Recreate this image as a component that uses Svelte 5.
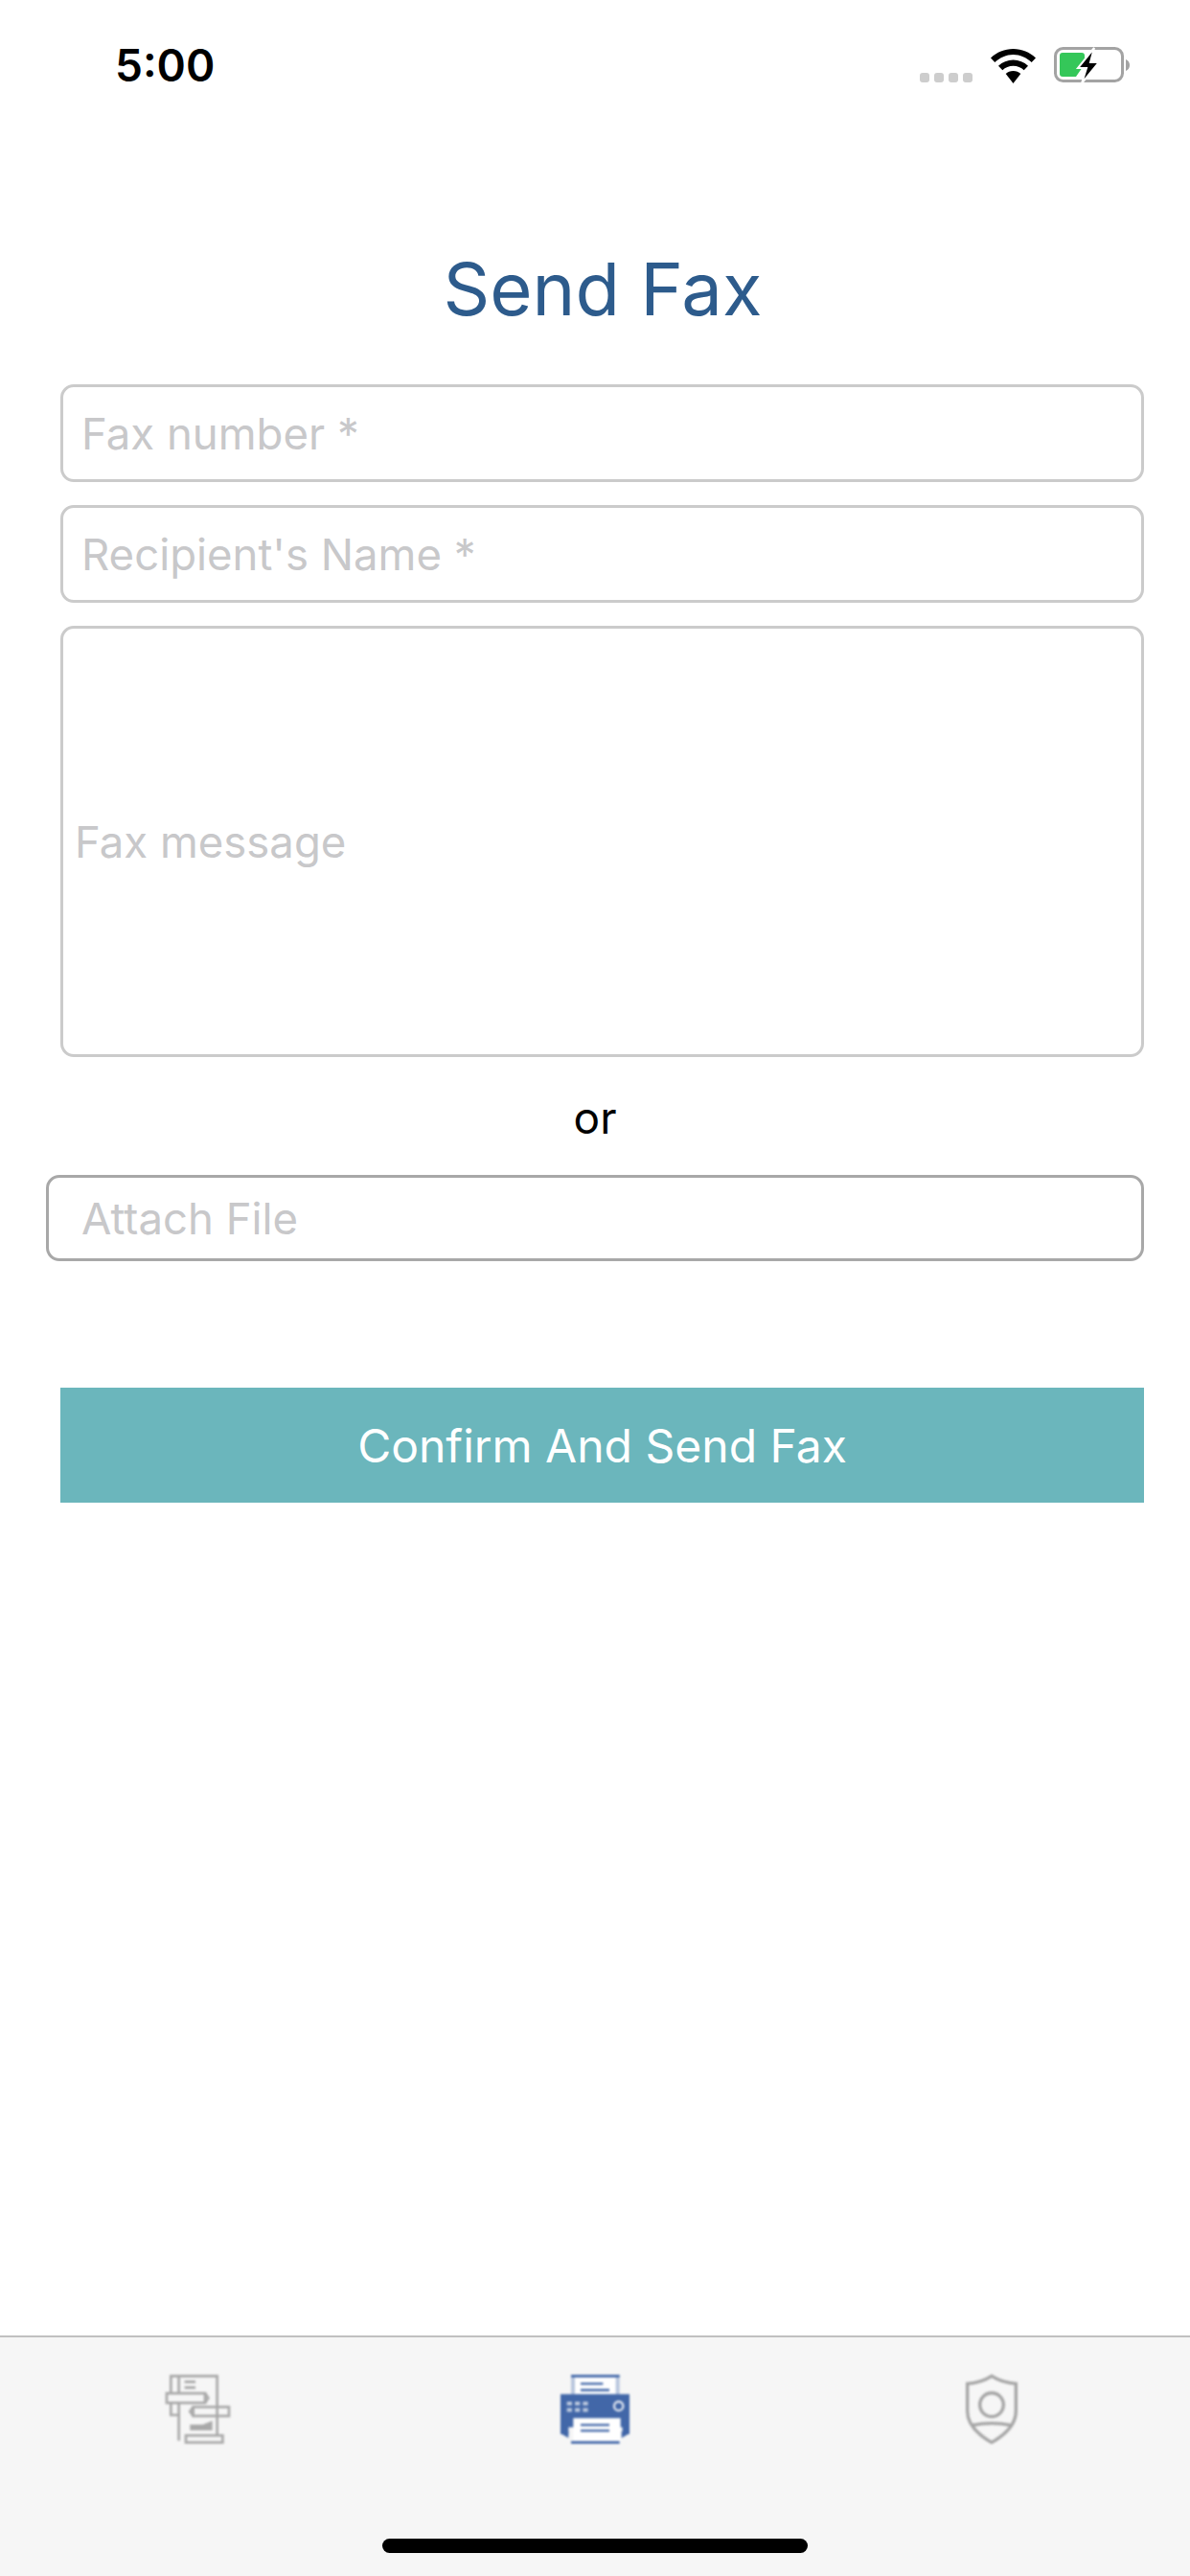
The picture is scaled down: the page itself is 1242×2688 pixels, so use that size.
<script>
  const fields = ["Fax number *", "Recipient's Name *"];
</script>

<div class="screen">
  <div class="status">
    <span class="time">5:00</span>
    <div class="status-icons">
      <div class="signal">
        <i></i><i></i><i></i><i></i>
      </div>
      <svg class="wifi" width="47" height="36" viewBox="0 0 47 36">
        <path d="M23.5 0C14.5 0 6.4 3.5 0 9.5l4.3 4.6C9.7 9 16.3 6 23.5 6s13.8 3 19.2 8.1L47 9.5C40.6 3.5 32.5 0 23.5 0z" fill="#000" />
        <path d="M23.5 11.5c-5.900 0-11.300 2.300-15.500 6.200l4.300 4.600c3-2.800 6.900-4.500 11.200-4.500s8.200 1.700 11.200 4.500l4.300-4.600c-4.200-3.900-9.600-6.200-15.500-6.200z" fill="#000" />
        <path d="M23.5 23c-3.100 0-5.800 1.200-7.800 3.100L23.500 36l7.800-9.900c-2-1.900-4.700-3.100-7.800-3.100z" fill="#000" />
      </svg>
      <svg class="battery" width="79" height="38" viewBox="0 0 79 38">
        <rect x="1.500" y="1.500" width="70" height="34" rx="8" fill="none" stroke="#a3a3a3" stroke-width="3" />
        <path d="M75 13c2.500 1 4 3 4 6s-1.500 5-4 6z" fill="#a3a3a3" />
        <path d="M9 6h20a3 3 0 0 1 3 3v9l-9 13H9a3 3 0 0 1-3-3V9a3 3 0 0 1 3-3z" fill="#34c759" />
        <path d="M42 1 25 22h9l-5 16 18-22h-9l4-15z" fill="#000" stroke="#fff" stroke-width="2" />
      </svg>
    </div>
  </div>

  <h1>Send Fax</h1>

  <form class="form">
    {#each fields as field}
      <div class="field"><span>{field}</span></div>
    {/each}
    <div class="field message"><span>Fax message</span></div>
    <p class="or">or</p>
    <div class="field attach"><span>Attach File</span></div>
    <button type="button">Confirm And Send Fax</button>
  </form>

  <nav class="tabs">
    <div class="tab">
      <svg width="120" height="100" viewBox="-9 0 360 300" fill="none" stroke="#a9a9a9" stroke-width="8">
        <path d="M85 112V58h145v182" />
        <path d="M85 142v38h25M110 58v54M110 142v118" />
        <rect x="72" y="112" width="120" height="30" />
        <path d="M192 112l10 15-10 15" />
        <rect x="155" y="155" width="112" height="28" />
        <path d="M155 155l-10 14 10 14" />
        <rect x="132" y="244" width="115" height="22" />
        <path d="M128 76h34M128 94h34" />
        <path d="M145 228v-18h40l30-12v30z" fill="#a9a9a9" stroke="none" />
      </svg>
    </div>
    <div class="tab">
      <svg width="120" height="100" viewBox="3 0 360 300">
        <path d="M108 54h152v66H108z" fill="#b8c6dd" />
        <path d="M120 60h128v56H120z" fill="#fff" />
        <path d="M108 54h152v8H108z" fill="#4267a8" />
        <path d="M138 82h70M138 102h90" stroke="#4267a8" stroke-width="7" />
        <path d="M75 115h216v125h-22v-22H100v22H75z" fill="#4267a8" />
        <path d="M75 238l25 14v-20H75zM291 238l-25 14v-20h25z" fill="#4267a8" />
        <path d="M95 138h16v12H95zM120 138h16v12h-16zM145 138h16v12h-16zM95 158h16v12H95zM120 158h16v12h-16zM145 158h16v12h-16z" fill="#b8c6dd" />
        <circle cx="257" cy="152" r="14" fill="none" stroke="#dfe5f0" stroke-width="7" />
        <path d="M115 190h148v74H115z" fill="#fff" />
        <path d="M108 262h152v8H108z" fill="#4267a8" />
        <path d="M138 211h90M138 229h90" stroke="#4267a8" stroke-width="7" />
      </svg>
    </div>
    <div class="tab">
      <svg width="120" height="100" viewBox="-15 0 360 300" fill="none" stroke="#a5a5a5" stroke-width="10">
        <path d="M165 58c22 14 50 22 76 24v86c0 40-34 74-76 98-42-24-76-58-76-98V82c26-2 54-10 76-24z" />
        <circle cx="165" cy="148" r="37" />
        <path d="M105 212c40-8 80-8 120 0" />
      </svg>
    </div>
    <div class="home"></div>
  </nav>
</div>

<style>
  :global(body) {
    background: #fff;
  }

  .screen {
    width: 1242px;
    height: 2688px;
    display: flex;
    flex-direction: column;
    font-family: Inter, "Liberation Sans", sans-serif;
    overflow: hidden;
  }

  .status {
    height: 132px;
    box-sizing: border-box;
    padding: 40px 63px 0 120px;
    display: flex;
    justify-content: space-between;
    align-items: flex-start;
  }

  .time {
    font-size: 46px;
    line-height: 56px;
    font-weight: 600;
    color: #000;
  }

  .status-icons {
    display: flex;
    align-items: flex-end;
    gap: 19px;
    padding-top: 9px;
  }

  .signal {
    display: flex;
    gap: 5px;
    margin-bottom: 1px;
  }

  .signal i {
    width: 10px;
    height: 10px;
    border-radius: 3px;
    background: #cdcdcd;
  }

  h1 {
    margin: 0;
    height: 269px;
    box-sizing: border-box;
    padding: 125px 0 0 16px;
    text-align: center;
    font-size: 76px;
    line-height: 88px;
    font-weight: 400;
    color: #2d5b8c;
  }

  .form {
    display: flex;
    flex-direction: column;
    padding: 0 48px 0 63px;
    flex: 1;
  }

  .field {
    height: 102px;
    box-sizing: border-box;
    border: 3px solid #cbcbcb;
    border-radius: 14px;
    margin-bottom: 24px;
    padding-left: 19px;
    display: flex;
    align-items: center;
    font-size: 45.5px;
    color: #c8c8ca;
  }

  .message {
    height: 450px;
    margin-bottom: 0;
    padding-left: 12px;
  }

  .or {
    margin: 0;
    height: 123px;
    line-height: 126px;
    text-align: center;
    font-size: 46px;
    color: #000;
    padding-right: 15px;
  }

  .attach {
    height: 90px;
    margin: 0 0 132px -15px;
    border-color: #a8a8a8;
    padding-left: 34px;
  }

  button {
    height: 120px;
    border: 0;
    padding: 0;
    background: #6bb6bc;
    color: #fff;
    font-family: inherit;
    font-size: 48px;
  }

  .tabs {
    position: relative;
    height: 251px;
    box-sizing: border-box;
    border-top: 2px solid #c0c0c0;
    background: #f6f6f6;
    display: grid;
    grid-template-columns: repeat(3, 1fr);
    align-items: start;
    padding-top: 21px;
  }

  .tab {
    display: flex;
    justify-content: center;
  }

  .tab svg {
    filter: blur(1.1px);
  }

  .home {
    position: absolute;
    left: 399px;
    bottom: 24px;
    width: 444px;
    height: 15px;
    border-radius: 8px;
    background: #000;
  }
</style>
